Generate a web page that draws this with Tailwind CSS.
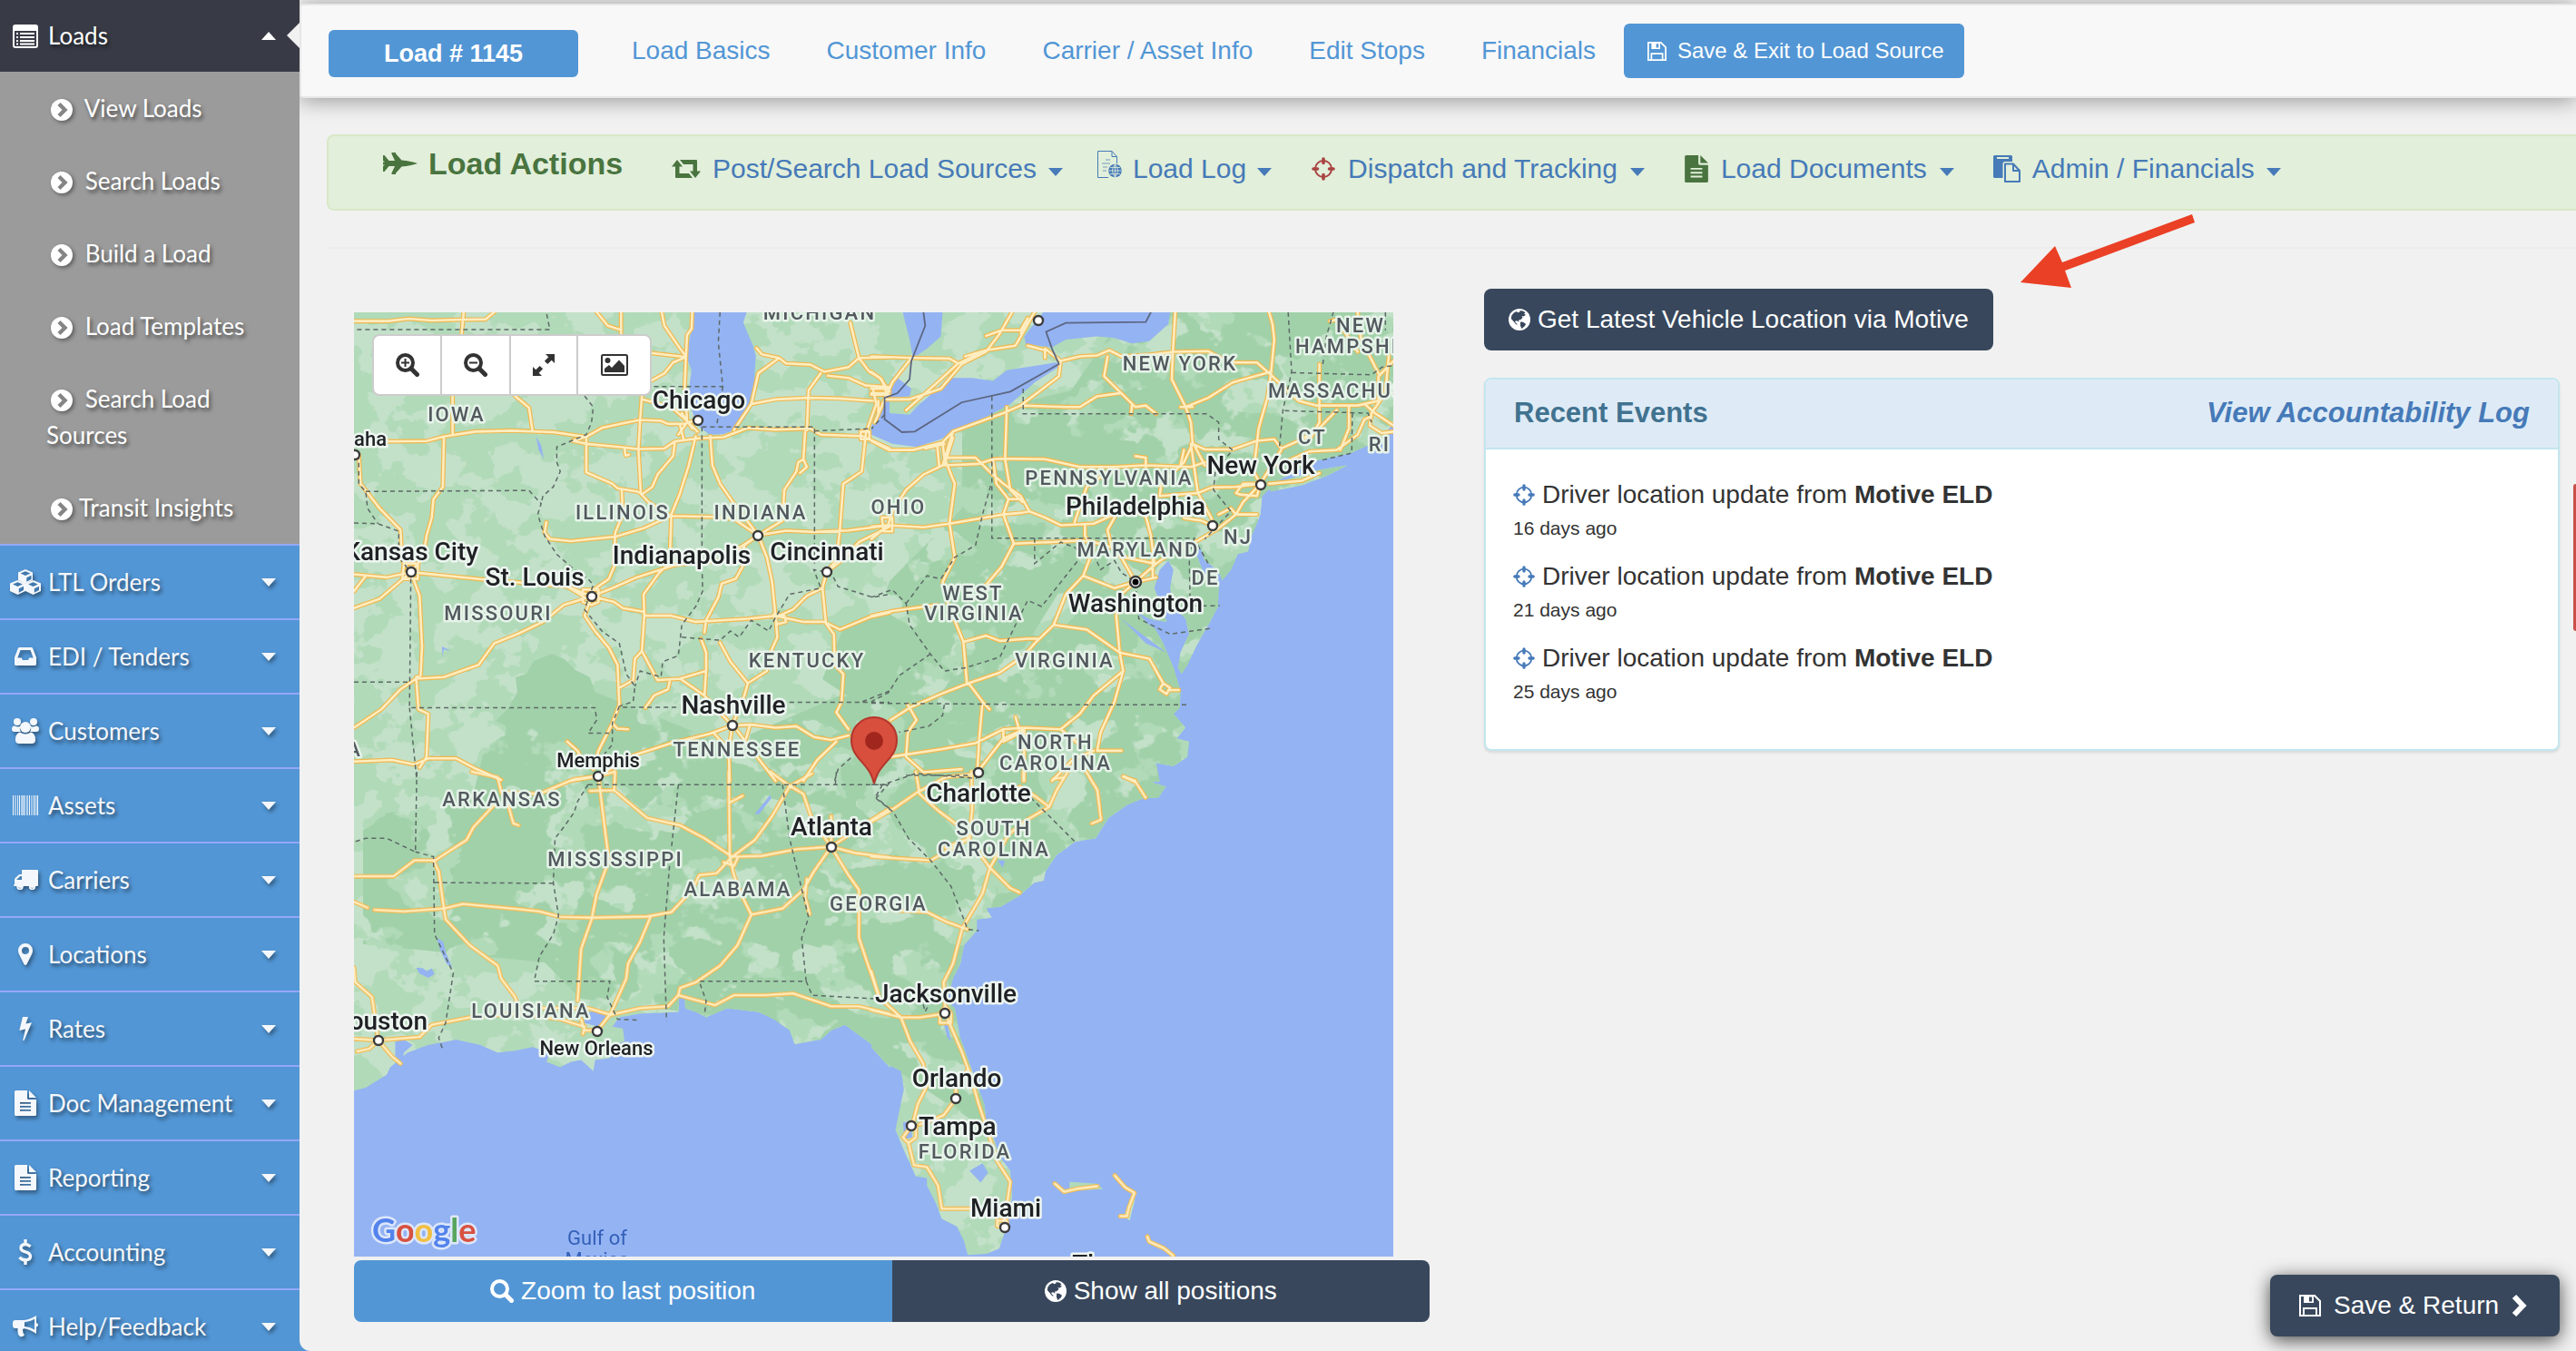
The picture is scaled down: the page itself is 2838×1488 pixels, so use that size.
<!DOCTYPE html>
<html lang="en">
  <head>
    <meta charset="UTF-8" />
    <title>Load # 1145</title>
    <script src="https://cdn.jsdelivr.net/npm/@tailwindcss/browser@4"></script>
  </head>
  <body class="h-screen overflow-hidden bg-[#5296d5] font-['Liberation_Sans',Arial,sans-serif] text-[28px] text-[#333]">

    <!-- Icon set -->
    <svg class="hidden">
      <symbol id="i-list" viewBox="0 0 28 26">
        <path fill="currentColor" fill-rule="evenodd" d="M3 0h22a3 3 0 0 1 3 3v20a3 3 0 0 1-3 3H3a3 3 0 0 1-3-3V3a3 3 0 0 1 3-3zM2 7v16q0 1 1 1h22q1 0 1-1V7z" />
        <path stroke="currentColor" stroke-width="2" d="M4 10h2M8 10h16M4 14h2M8 14h16M4 18h2M8 18h16M4 21.500h2M8 21.500h16" />
      </symbol>
      <symbol id="i-go" viewBox="0 0 24 24">
        <circle cx="12" cy="12" r="12" fill="currentColor" />
        <path d="M9 5.500l6.500 6.500L9 18.500" fill="none" stroke="#858585" stroke-width="4.400" />
      </symbol>
      <symbol id="i-cubes" viewBox="0 0 34 28">
        <g fill="currentColor">
          <path d="M17 0l8 3.500v8.500l-8 4-8-4V3.500z" />
          <path d="M8.500 12l8.500 3.500v8.500l-8.500 4L0 24v-8.500z" />
          <path d="M25.500 12l8.500 3.500v8.500l-8.500 4-8.500-4v-8.500z" />
        </g>
        <g fill="#3f78ad">
          <path d="M17 2.200l5.400 2.300L17 6.900l-5.400-2.400z" />
          <path d="M8.500 14.200l5.400 2.300-5.400 2.400-5.400-2.400zM25.500 14.200l5.400 2.300-5.400 2.400-5.400-2.400z" />
          <path d="M18.300 9.200l5.200-2.400v4.300l-5.200 2.600zM9.800 21.200l5.200-2.400v4.300l-5.200 2.600zM26.800 21.200l5.200-2.400v4.300l-5.200 2.600z" />
        </g>
      </symbol>
      <symbol id="i-inbox" viewBox="0 0 24 20">
        <path fill="currentColor" fill-rule="evenodd" d="M5.500 0h13q1.200 0 1.700 1.200L24 11v7.500q0 1.500-1.500 1.500h-21Q0 20 0 18.500V11L3.800 1.200Q4.300 0 5.500 0zM6.500 3L3.400 11.500h4.300L9 14h6l1.300-2.500h4.300L17.500 3z" />
      </symbol>
      <symbol id="i-users" viewBox="0 0 30 28">
        <g fill="currentColor">
          <circle cx="6" cy="4" r="4" /><circle cx="24" cy="4" r="4" />
          <path d="M3 8.500q5 2 6.500-.3Q8 12 9.800 15H3q-3 0-3-3 0-3.500 3-3.500zM27 8.500q-5 2-6.500-.3Q22 12 20.200 15H27q3 0 3-3 0-3.500-3-3.500z" />
          <circle cx="15" cy="10" r="6" />
          <path d="M9 15.500q6 4 12 0 5 1 5 8.500 0 4-4 4H8q-4 0-4-4 0-7.500 5-8.500z" />
        </g>
      </symbol>
      <symbol id="i-barcode" viewBox="0 0 28 22">
        <path fill="currentColor" d="M0 0h1v22H0zM2.500 0h1v22h-1zM5 0h.8v22H5zM7 0h1v22H7zM18 0h1v22h-1zM20.500 0h1v22h-1zM23 0h1.200v22H23zM27 0h1v22h-1z" />
        <path fill="currentColor" opacity=".6" d="M9 0h5v22H9zM15 0h2v22h-2zM25 0h1.500v22H25z" />
      </symbol>
      <symbol id="i-truck" viewBox="0 0 27 22">
        <path fill="currentColor" fill-rule="evenodd" d="M10 0h16q1 0 1 1v16q0 1-1 1h-2a4 4 0 0 1-7 0h-6a4 4 0 0 1-7 0H1q-1 0-1-1 0-1 1-1V11q0-1 .7-1.700L5.300 5.700Q6 5 7 5h2V1q0-1 1-1zM3 11h6V7H7.200z" />
        <circle cx="7" cy="18.500" r="2.800" fill="none" stroke="currentColor" stroke-width="1.800" />
        <circle cx="20.500" cy="18.500" r="2.800" fill="none" stroke="currentColor" stroke-width="1.800" />
      </symbol>
      <symbol id="i-pin" viewBox="0 0 16 24">
        <path fill="currentColor" fill-rule="evenodd" d="M8 0a8 8 0 0 1 8 8q0 2-1 4L9.500 23q-1.500 2-3 0L1 12Q0 10 0 8a8 8 0 0 1 8-8zm0 4a4 4 0 1 0 0 8 4 4 0 0 0 0-8z" />
      </symbol>
      <symbol id="i-bolt" viewBox="0 0 14 26">
        <path fill="currentColor" d="M4 0h6L7.500 7.500 14 6.200 5.500 26h-1.300L7 13.500.3 15z" />
      </symbol>
      <symbol id="i-file" viewBox="0 0 24 28">
        <path fill="currentColor" fill-rule="evenodd" d="M1.500 0H14v8.500q0 1.500 1.500 1.500H24v16.500q0 1.500-1.500 1.500h-21Q0 28 0 26.500v-25Q0 0 1.500 0zM6 13v1.800h12V13zm0 4v1.800h12V17zm0 4v1.800h12V21z" />
        <path fill="currentColor" d="M16 0l8 8h-8z" />
      </symbol>
      <symbol id="i-dollar" viewBox="0 0 16 28">
        <path d="M13.500 8Q11 5.500 8 5.500q-5 0-5 4 0 3 5 4.300 5.500 1.400 5.500 5 0 4-5.500 4-4 0-6.500-3M8 0v6M8 22v6" fill="none" stroke="currentColor" stroke-width="3.400" />
      </symbol>
      <symbol id="i-horn" viewBox="0 0 28 24">
        <path fill="currentColor" fill-rule="evenodd" d="M26 0v8q2 .3 2 2.300T26 12.600V20Q19 14.800 12 14.200q-2 1.500-.6 3.300-.6 1.500 1.600 3.500-1.300 2.800-5 2Q5 21 5.500 14H3q-3 0-3-3V8q0-3 3-3h8Q18 5 26 0zm-2 3.700Q18.500 6.900 13 7.200v4.700q5.500.3 11 3.600z" />
      </symbol>
      <symbol id="i-caret" viewBox="0 0 16 9"><path fill="currentColor" d="M0 0h16L8 9z" /></symbol>
      <symbol id="i-floppy" viewBox="0 0 24 24">
        <path fill="none" stroke="currentColor" stroke-width="2" d="M1 1h16l6 6v16H1z" />
        <path fill="none" stroke="currentColor" stroke-width="2" d="M5 23v-8h14v8" />
        <path fill="currentColor" fill-rule="evenodd" d="M5 1h11v8H5zm6 1.500v5h3v-5z" />
      </symbol>
      <symbol id="i-jet" viewBox="0 0 38 24">
        <path fill="currentColor" d="M0 3h1.500l5 6H13L9.500 1.500V0H14v1.200l6.500 7.300 5 .5Q34 10.500 38 12q-4 1.500-12.500 3l-5 .5L14 22.800V24H9.500v-1.500L13 15H6.500l-5 6H0v-6l2-1.500H0v-3h2L0 9z" />
      </symbol>
      <symbol id="i-retweet" viewBox="0 0 32 20">
        <path fill="currentColor" d="M6 0l6 7.500H8.500V15H19l4 5H5q-1 0-1-1V7.500H0zM26 20l-6-7.500h3.500V5H13L9 0h18q1 0 1 1v11.500h4z" />
      </symbol>
      <symbol id="i-target" viewBox="0 0 26 26">
        <circle cx="13" cy="13" r="9" fill="none" stroke="currentColor" stroke-width="2" />
        <path stroke="currentColor" stroke-width="3.600" stroke-linecap="round" d="M13 2v4.500M13 19.500v4.500M2 13h4.500M19.500 13h4.500" />
      </symbol>
      <symbol id="i-weblog" viewBox="0 0 27 30">
        <path fill="none" stroke="currentColor" stroke-width="1" d="M12 29.500H.5V.5h15.500l5.500 6V14M16 .5v6h5.500" />
        <path stroke="currentColor" stroke-width="1" opacity=".7" d="M9 10h5M5 14h9M6 18h5M6 22h4" />
        <circle cx="19.500" cy="22" r="7.300" fill="currentColor" />
        <path fill="none" stroke="#e2efda" stroke-width=".8" d="M12.500 22h14M19.500 15v14M14 18.500h11M14 25.500h11M19.500 15q-6 7 0 14M19.500 15q6 7 0 14" />
      </symbol>
      <symbol id="i-paste" viewBox="0 0 30 30">
        <path fill="currentColor" fill-rule="evenodd" d="M1.500 0h18Q21 0 21 1.500V7h-8q-2.500 0-2.500 2.500V25h-9Q0 25 0 23.500v-22Q0 0 1.500 0zM4 2v2h13V2z" />
        <path fill="none" stroke="currentColor" stroke-width="2" stroke-linejoin="round" d="M13 9.500h9l7 7.500v12H13zM22 9.500V17h7" />
      </symbol>
      <symbol id="i-globe" viewBox="0 0 24 24">
        <circle cx="12" cy="12" r="12" fill="currentColor" />
        <path fill="#38475c" d="M12.500 2l4 .8 2 1.700-1.500 1.200 2 1-2.500 1.800-2-.5 1 2-2.500 2.300-2 .3.500 2.200-1.800-1.200-2-.3-.4 1.800 1.800 1.500.8 1.200-2-.8-2.400-3L2.800 11l.6-3.500 2.400-3L9 3l1 1.200 2.500-.7zM13 14.500l3 .2 3 2-1 2.300-3.500 3-1.500-3z" />
      </symbol>
      <symbol id="i-search" viewBox="0 0 26 26">
        <circle cx="10.500" cy="10.500" r="8.500" fill="none" stroke="currentColor" stroke-width="4" />
        <path d="M17 17l6.500 6.500" stroke="currentColor" stroke-width="5" stroke-linecap="round" />
      </symbol>
      <symbol id="i-expand" viewBox="0 0 24 24">
        <path fill="currentColor" d="M14 0h10v10l-3.300-3.300-4.400 4.400-3.400-3.400 4.400-4.400zM10 24H0V14l3.300 3.300 4.400-4.400 3.400 3.400-4.400 4.400z" />
      </symbol>
      <symbol id="i-image" viewBox="0 0 30 24">
        <rect x="1" y="1" width="28" height="22" rx="1.500" fill="none" stroke="currentColor" stroke-width="2" />
        <circle cx="7.500" cy="7" r="3" fill="currentColor" />
        <path fill="currentColor" d="M4 20v-4l5-4 3 3 8-8.500 6 6.500v7z" />
      </symbol>
      <symbol id="i-next" viewBox="0 0 17 26">
        <path d="M3 3l9.500 10L3 23" fill="none" stroke="currentColor" stroke-width="6" />
      </symbol>
    </svg>

    <div class="flex h-full">

      <!-- Sidebar -->
      <aside class="relative w-[330px] shrink-0 font-[Lato,'Open_Sans',sans-serif] text-[26px] text-white [text-shadow:2px_3px_4px_rgba(0,0,0,.55)]">
        <a href="#loads" class="relative flex h-[79px] items-center bg-[#383b46] pl-[14px] pr-[26px]">
          <svg class="mr-[11px] h-[26px] w-[28px]"><use href="#i-list" /></svg>
          Loads
          <svg class="ml-auto h-[11px] w-[16px] rotate-180"><use href="#i-caret" /></svg>
          <svg class="absolute right-0 top-[25px] h-[28px] w-[14px]" viewBox="0 0 14 28"><path fill="#f1f1f1" d="M14 0v28L0 14z" /></svg>
        </a>
        <ul class="bg-[#9b9b9b] leading-[40px]">
          <li><a href="#view" class="block py-[20px] pl-[51px] pr-5"><svg class="ml-[5px] mr-[7px] inline h-6 w-6 align-[-4px] drop-shadow-[2px_2px_2px_rgba(0,0,0,.4)]"><use href="#i-go" /></svg> View Loads</a></li>
          <li><a href="#search" class="block py-[20px] pl-[51px] pr-5"><svg class="ml-[5px] mr-[7px] inline h-6 w-6 align-[-4px] drop-shadow-[2px_2px_2px_rgba(0,0,0,.4)]"><use href="#i-go" /></svg> Search Loads</a></li>
          <li><a href="#build" class="block py-[20px] pl-[51px] pr-5"><svg class="ml-[5px] mr-[7px] inline h-6 w-6 align-[-4px] drop-shadow-[2px_2px_2px_rgba(0,0,0,.4)]"><use href="#i-go" /></svg> Build a Load</a></li>
          <li><a href="#templates" class="block py-[20px] pl-[51px] pr-5"><svg class="ml-[5px] mr-[7px] inline h-6 w-6 align-[-4px] drop-shadow-[2px_2px_2px_rgba(0,0,0,.4)]"><use href="#i-go" /></svg> Load Templates</a></li>
          <li><a href="#sources" class="block py-[20px] pl-[51px] pr-8"><svg class="ml-[5px] mr-[7px] inline h-6 w-6 align-[-4px] drop-shadow-[2px_2px_2px_rgba(0,0,0,.4)]"><use href="#i-go" /></svg> Search Load Sources</a></li>
          <li><a href="#transit" class="block py-[20px] pl-[51px] pr-5"><svg class="ml-[5px] mr-[7px] inline h-6 w-6 align-[-4px] drop-shadow-[2px_2px_2px_rgba(0,0,0,.4)]"><use href="#i-go" /></svg>Transit Insights</a></li>
        </ul>
        <nav class="text-[#f4f7fb]">
          <a href="#ltl" class="flex h-[82px] items-center border-t-2 border-[#94a8f8] pl-[10px] pr-[26px]"><span class="mr-[7px] flex w-9 justify-center drop-shadow-[2px_3px_2px_rgba(0,0,0,.4)]"><svg class="h-[28px] w-[34px]"><use href="#i-cubes" /></svg></span>LTL Orders<svg class="ml-auto h-[9px] w-[16px] drop-shadow-[2px_3px_2px_rgba(0,0,0,.4)]"><use href="#i-caret" /></svg></a>
          <a href="#edi" class="flex h-[82px] items-center border-t-2 border-[#94a8f8] pl-[10px] pr-[26px]"><span class="mr-[7px] flex w-9 justify-center drop-shadow-[2px_3px_2px_rgba(0,0,0,.4)]"><svg class="h-[20px] w-[24px]"><use href="#i-inbox" /></svg></span>EDI / Tenders<svg class="ml-auto h-[9px] w-[16px] drop-shadow-[2px_3px_2px_rgba(0,0,0,.4)]"><use href="#i-caret" /></svg></a>
          <a href="#customers" class="flex h-[82px] items-center border-t-2 border-[#94a8f8] pl-[10px] pr-[26px]"><span class="mr-[7px] flex w-9 justify-center drop-shadow-[2px_3px_2px_rgba(0,0,0,.4)]"><svg class="h-[28px] w-[30px]"><use href="#i-users" /></svg></span>Customers<svg class="ml-auto h-[9px] w-[16px] drop-shadow-[2px_3px_2px_rgba(0,0,0,.4)]"><use href="#i-caret" /></svg></a>
          <a href="#assets" class="flex h-[82px] items-center border-t-2 border-[#94a8f8] pl-[10px] pr-[26px]"><span class="mr-[7px] flex w-9 justify-center"><svg class="h-[22px] w-[28px]"><use href="#i-barcode" /></svg></span>Assets<svg class="ml-auto h-[9px] w-[16px] drop-shadow-[2px_3px_2px_rgba(0,0,0,.4)]"><use href="#i-caret" /></svg></a>
          <a href="#carriers" class="flex h-[82px] items-center border-t-2 border-[#94a8f8] pl-[10px] pr-[26px]"><span class="mr-[7px] flex w-9 justify-center drop-shadow-[2px_3px_2px_rgba(0,0,0,.4)]"><svg class="h-[22px] w-[27px]"><use href="#i-truck" /></svg></span>Carriers<svg class="ml-auto h-[9px] w-[16px] drop-shadow-[2px_3px_2px_rgba(0,0,0,.4)]"><use href="#i-caret" /></svg></a>
          <a href="#locations" class="flex h-[82px] items-center border-t-2 border-[#94a8f8] pl-[10px] pr-[26px]"><span class="mr-[7px] flex w-9 justify-center drop-shadow-[2px_3px_2px_rgba(0,0,0,.4)]"><svg class="h-[24px] w-[16px]"><use href="#i-pin" /></svg></span>Locations<svg class="ml-auto h-[9px] w-[16px] drop-shadow-[2px_3px_2px_rgba(0,0,0,.4)]"><use href="#i-caret" /></svg></a>
          <a href="#rates" class="flex h-[82px] items-center border-t-2 border-[#94a8f8] pl-[10px] pr-[26px]"><span class="mr-[7px] flex w-9 justify-center drop-shadow-[2px_3px_2px_rgba(0,0,0,.4)]"><svg class="h-[26px] w-[14px]"><use href="#i-bolt" /></svg></span>Rates<svg class="ml-auto h-[9px] w-[16px] drop-shadow-[2px_3px_2px_rgba(0,0,0,.4)]"><use href="#i-caret" /></svg></a>
          <a href="#docs" class="flex h-[82px] items-center border-t-2 border-[#94a8f8] pl-[10px] pr-[26px]"><span class="mr-[7px] flex w-9 justify-center drop-shadow-[2px_3px_2px_rgba(0,0,0,.4)]"><svg class="h-[28px] w-[24px]"><use href="#i-file" /></svg></span>Doc Management<svg class="ml-auto h-[9px] w-[16px] drop-shadow-[2px_3px_2px_rgba(0,0,0,.4)]"><use href="#i-caret" /></svg></a>
          <a href="#reporting" class="flex h-[82px] items-center border-t-2 border-[#94a8f8] pl-[10px] pr-[26px]"><span class="mr-[7px] flex w-9 justify-center drop-shadow-[2px_3px_2px_rgba(0,0,0,.4)]"><svg class="h-[28px] w-[24px]"><use href="#i-file" /></svg></span>Reporting<svg class="ml-auto h-[9px] w-[16px] drop-shadow-[2px_3px_2px_rgba(0,0,0,.4)]"><use href="#i-caret" /></svg></a>
          <a href="#accounting" class="flex h-[82px] items-center border-t-2 border-[#94a8f8] pl-[10px] pr-[26px]"><span class="mr-[7px] flex w-9 justify-center drop-shadow-[2px_3px_2px_rgba(0,0,0,.4)]"><svg class="h-[28px] w-[16px]"><use href="#i-dollar" /></svg></span>Accounting<svg class="ml-auto h-[9px] w-[16px] drop-shadow-[2px_3px_2px_rgba(0,0,0,.4)]"><use href="#i-caret" /></svg></a>
          <a href="#help" class="flex h-[82px] items-center border-t-2 border-[#94a8f8] pl-[10px] pr-[26px]"><span class="mr-[7px] flex w-9 justify-center drop-shadow-[2px_3px_2px_rgba(0,0,0,.4)]"><svg class="h-[24px] w-[28px]"><use href="#i-horn" /></svg></span>Help/Feedback<svg class="ml-auto h-[9px] w-[16px] drop-shadow-[2px_3px_2px_rgba(0,0,0,.4)]"><use href="#i-caret" /></svg></a>
        </nav>
      </aside>

      <main class="relative min-w-0 flex-1 overflow-hidden rounded-bl-[12px] bg-[#f1f1f1] pt-1">

        <!-- Top nav -->
        <header class="flex h-[104px] items-center rounded-l-[4px] border-2 border-r-0 border-[#e7e7e7] bg-[#f8f8f8] pl-[30px] text-[#5296d5] shadow-[0_2px_24px_rgba(0,0,0,.4)]">
          <button class="mt-1.5 h-[52px] w-[275px] rounded-md bg-[#5296d5] text-[27px] font-bold text-white">Load # 1145</button>
          <nav class="ml-7 flex">
            <a href="#basics" class="px-[31px]">Load Basics</a>
            <a href="#customer" class="px-[31px]">Customer Info</a>
            <a href="#carrier" class="px-[31px]">Carrier / Asset Info</a>
            <a href="#stops" class="px-[31px]">Edit Stops</a>
            <a href="#financials" class="px-[31px]">Financials</a>
          </nav>
          <button class="flex h-[60px] items-center gap-3 rounded-md bg-[#5296d5] pl-[26px] pr-[22px] text-[24px] text-white">
            <svg class="h-[21px] w-[21px]"><use href="#i-floppy" /></svg>Save &amp; Exit to Load Source
          </button>
        </header>

        <!-- Load actions -->
        <section class="ml-[30px] mt-10 flex items-start rounded-l-lg border-2 border-r-0 border-[#d9e8c6] bg-[#e2efda] pb-2 pl-[60px] text-[30px] leading-[72px] text-[#467ab8]">
          <h4 class="mr-[54px] flex items-center gap-3 text-[34px] font-bold leading-[60px] text-[#49743f]">
            <svg class="h-[24px] w-[38px]"><use href="#i-jet" /></svg>Load Actions
          </h4>
          <a href="#post" class="flex items-center gap-[13px]"><svg class="h-[20px] w-[32px] text-[#49743f]"><use href="#i-retweet" /></svg>Post/Search Load Sources<svg class="mt-1.5 h-[9px] w-[16px]"><use href="#i-caret" /></svg></a>
          <a href="#log" class="ml-[38px] flex items-center gap-3"><svg class="mb-2.5 h-[30px] w-[27px]"><use href="#i-weblog" /></svg>Load Log<svg class="mt-1.5 h-[9px] w-[16px]"><use href="#i-caret" /></svg></a>
          <a href="#dispatch" class="ml-11 flex items-center gap-[14px]"><svg class="h-[26px] w-[26px] text-[#a94442]"><use href="#i-target" /></svg>Dispatch and Tracking<svg class="mt-1.5 h-[9px] w-[16px]"><use href="#i-caret" /></svg></a>
          <a href="#documents" class="ml-11 flex items-center gap-[14px]"><svg class="h-[30px] w-[26px] text-[#49743f]"><use href="#i-file" /></svg>Load Documents<svg class="mt-1.5 h-[9px] w-[16px]"><use href="#i-caret" /></svg></a>
          <a href="#admin" class="ml-[43px] flex items-center gap-[13px]"><svg class="h-[30px] w-[30px]"><use href="#i-paste" /></svg>Admin / Financials<svg class="mt-1.5 h-[9px] w-[16px]"><use href="#i-caret" /></svg></a>
        </section>

        <hr class="ml-[30px] mt-10 border-t-2 border-[#ececec]" />

        <div class="mt-11 grid grid-cols-2 gap-[60px] pl-[60px] pr-[18px]">

          <!-- Map -->
          <div class="pt-[26px]">
            <div class="relative mr-10">
              <svg class="block w-full" viewBox="390 344 1145 1040">
                <defs>
                  <filter id="light" x="0" y="0" width="1" height="1" color-interpolation-filters="sRGB">
                    <feTurbulence type="fractalNoise" baseFrequency=".024 .028" numOctaves="4" seed="8" />
                    <feColorMatrix values="0 0 0 0 .765  0 0 0 0 .882  0 0 0 0 .79  26 0 0 0 -12.800" />
                    <feComposite in2="SourceAlpha" operator="in" />
                  </filter>
                  <filter id="dark" x="0" y="0" width="1" height="1" color-interpolation-filters="sRGB">
                    <feTurbulence type="fractalNoise" baseFrequency=".02 .024" numOctaves="4" seed="31" />
                    <feColorMatrix values="0 0 0 0 .631  0 0 0 0 .82  0 0 0 0 .663  0 26 0 0 -11" />
                    <feComposite in2="SourceAlpha" operator="in" />
                  </filter>
                  <clipPath id="hills">
                    <path d="M1535 344V800L1240 1060 1080 1240 960 1160 800 1120 640 1100 600 1060 400 1040V900L520 880 540 800 600 740 700 780 800 820 940 760 980 640 1060 560 1060 460 1180 430 1240 344z" />
                  </clipPath>

                  <g id="land">
                    <g transform="translate(380 330) scale(.38265 .33801)">
                      <path d="M0 0H1570V1570H0z" />
                    </g>
                    <g transform="translate(960 330) scale(.38265 .33801)">
                      <path d="M0 0H1520V430L1460 470 1430 475 1380 500 1280 525 1170 590 1125 640 1120 700 1095 770 1085 820 1055 830 1035 880 1010 915 1000 885 960 850 945 800 935 830 960 900 1000 930 998 1000 970 1060 935 1130 910 1190 893 1220 883 1200 890 1150 915 1090 905 1040 870 1000 860 940 870 880 855 850 830 880 815 940 835 1000 850 1050 800 1040 840 1120 870 1200 890 1275 888 1330 870 1350 905 1395 880 1430 915 1440 910 1490 870 1520 820 1510 830 1570H0zM1140 605L1290 555 1370 540 1310 575 1240 605 1150 625z" />
                    </g>
                    <g transform="translate(380 850) scale(.38265 .40689)">
                      <path d="M0 0H1570V803L1520 740 1490 720 1440 685 1400 700 1370 725 1295 737 1280 700 1235 670 1190 650 1100 640 1040 665 1010 650 980 640 978 612 962 614 960 650 850 655 790 665 770 690 800 695 805 730 745 745 765 775 720 780 715 810 680 780 650 785 620 800 580 785 590 760 540 745 490 755 440 760 390 740 320 725 240 740 180 760 130 800 120 820 60 855 0 870z" />
                    </g>
                    <g transform="translate(960 850) scale(.40816 .40689)">
                      <path d="M0 0H775L760 30 795 40 775 70 735 72 690 90 640 125 605 180 550 190 500 225 470 270 465 295 440 300 400 335 350 365 310 370 325 395 285 400 285 430 250 470 240 520 220 560 205 620 225 640 240 720 265 790 290 860 305 900 310 950 330 990 345 1040 375 1080 380 1150 365 1230 345 1290 310 1305 260 1308 250 1270 230 1230 190 1210 175 1170 150 1120 150 1100 120 1095 95 1040 65 970 75 920 88 860 80 810 40 790 0 745zM535 1110l75 5 15 15-90 5zM700 1150l12 5-15 60-15-12z" />
                    </g>
                  </g>

                  <!-- Interstates -->
                  <g id="roads" fill="none" stroke-linejoin="round" stroke-linecap="round">
                    <path vector-effect="non-scaling-stroke" transform="translate(380 330) scale(.38265 .33801)" d="M26 70L125 70 185 62 250 68 315 66 405 64 430 41M342 41L340 66 336 112 310 314 310 437M725 41L757 85 793 98M795 41V112M912 41L920 85 965 160 982 185M1000 41L998 95 985 115 982 185 978 290 985 390M880 174L982 187 945 205 920 240 880 265M26 463L235 461 285 446 375 430 480 427 600 432 695 447 655 460 695 470 790 480 845 487 920 485 950 462 1020 452 1090 448 1160 418 1240 424 1340 420 1370 440 1490 445 1568 485M285 446L282 610 255 650 250 710 235 770 225 840 190 888M490 314L530 352 540 427M695 447V563L770 600 785 615 840 625 857 633M695 447L740 418 800 403 850 392 910 395 930 405 980 405M855 314L850 392 845 487 852 633 875 660 938 705 1060 708 1120 715 1190 768M855 325L940 350 975 385 1015 430M970 370L1000 420M960 440L985 400 1010 395M965 410L975 455M805 485L808 508 818 505M950 462L945 510 900 570 885 610 857 633M1010 445L990 540 965 630 940 700 938 760 935 860 905 890 860 960M1052 445L1058 540 1080 600 1120 665 1190 768M1190 768L1270 753 1350 757 1450 752 1568 735M1190 768L1260 720 1265 620 1300 560 1305 530 1320 520 1330 545 1310 565M1320 520L1325 430M1170 340L1240 325 1330 320 1420 322 1520 330M1120 425L1170 340 1190 240 1250 190 1270 208 1340 212 1380 235 1450 220 1480 190 1568 188M1185 158L1200 178 1250 190M1370 240L1335 295 1330 425M1455 75L1480 190 1510 235 1540 255 1568 300M1390 248L1450 255 1500 280 1568 285M1520 290L1530 340 1500 435 1488 560 1435 600 1425 750 1415 850 1387 887M1515 290H1568M1515 310H1568M1485 430h25v25h-25zM1568 740L1480 790 1430 850 1387 887 1375 940 1330 965 1290 1010 1240 1035M1190 768L1150 800 1145 870 1125 910 1085 925 1075 970 1040 1045 1035 1085M1190 768L1215 840 1230 920 1240 1035 1245 1100 1225 1150 1215 1210 1160 1250 1150 1290 1115 1388M1235 1025l30 5 5 20-25 8zM1025 1105L1040 1150V1210L1035 1290M1080 1118L1110 1180 1160 1250M710 967L775 985 800 1005 860 1017 865 1030 940 1030 1010 1050 1160 1040 1240 1030 1320 1050 1380 1050 1425 1075 1510 1035 1568 1020M1375 940L1385 1055 1408 1090 1410 1190 1435 1220 1430 1310 1415 1345 1450 1400M40 505L45 600 100 680 160 750 165 850 190 888M26 895L120 905 190 888 400 912 640 935 710 967M640 935L690 970M190 888L215 965 222 1130 218 1225 205 1230 212 1335 240 1350 235 1490 215 1525M190 888L100 975 26 1005M60 900L26 950M170 860h40v50h-45zM685 945h45v40l-20 10-25-10zM710 967L630 995 570 1050 500 1088 430 1120 385 1190 285 1230 205 1235 160 1270 105 1335 26 1395M710 967L690 1030 720 1080 760 1135 785 1190 790 1320 770 1380 730 1470 715 1530M710 967L770 940 840 905 950 865 1080 850 1190 768M710 950L760 910 775 870 778 760 800 700 797 620M580 725L575 760 590 780 650 787 780 772 860 745 938 705M860 960L862 1030 855 1145 835 1170 830 1240 790 1265M855 1145L900 1240 965 1235 1040 1210M965 1235L1035 1290 1115 1388M865 1330L890 1290 930 1270 935 1245M1115 1388L1050 1415 940 1445 830 1485 730 1552M1115 1388L1170 1385 1240 1395 1300 1390 1350 1425 1400 1435 1450 1420M1060 1410L1100 1460M1165 1390L1155 1430M1130 1405L1180 1480 1240 1568M1115 1388L1105 1470 1108 1568M1415 1440L1360 1500 1320 1568M730 1552L650 1568M640 1440L670 1470 690 1520M26 1505L135 1500 200 1515 240 1495 320 1495 370 1525 450 1565M770 1380L785 1398 815 1400" />
                    <path vector-effect="non-scaling-stroke" transform="translate(960 330) scale(.38265 .33801)" d="M0 185L120 190 225 192 250 208 330 165 415 150 440 100 460 60M405 41L370 110 330 170 260 210 200 290 110 325 45 325M470 41L430 110M330 118L375 100 430 100 450 60M270 185L330 165M250 208L190 270 150 310 100 360M115 190L60 270 40 320 10 400M0 235L30 260 45 310M0 290H40M0 305H40M20 330V370M450 150L500 165V190M500 160L545 200M0 460L50 490 120 490 205 465 235 430 380 370 430 345 540 250 545 200 600 185 650 182 685 165 720 185 800 180 870 170 970 168 1030 205 1110 205 1150 245M875 41L868 170 865 260 905 350 920 400 925 470 900 530 835 600 830 640M1145 41L1155 80 1160 130 1150 245 1140 320 1115 420 1110 470M890 350H925M905 350L970 320 1040 270 1150 235M680 185L670 250 715 300 760 350 790 345 820 372M430 345L560 350 600 350 650 315 715 305M750 345L748 372M390 350L385 520M205 465L210 515 300 515 340 560 380 600 430 640 455 690 500 710 545 735 640 730 700 700 760 690M155 485L210 470M190 480L195 540M235 450L210 540M210 540L310 535 350 520 385 518 500 520 600 545 700 545 790 540 920 545 960 530M760 510L790 515V545M925 470L960 488 1040 488 1110 460 1160 455 1180 485 1230 460 1280 430 1340 360M930 475L960 540M900 490L890 540M1180 490L1120 600M1170 540L1260 495 1340 490 1400 440 1420 390 1440 380M1145 600L1240 590 1290 565M1290 210V400L1260 460M1150 245L1230 330 1280 345 1400 345 1460 330 1460 250 1503 200M1400 41L1410 130 1460 240M1420 340L1450 370 1503 410M1440 370L1470 320M1440 370L1435 410 1470 435 1503 430M1320 70L1340 65 1400 170M1490 180L1480 300M1375 345V420L1350 490M1110 470L1100 560 1120 600 1070 660 1050 700 1000 745 940 785 870 820 820 860 760 920 720 960 705 1030 715 1150M1050 630L1070 600 1120 600 1110 640 1060 635zM1050 700H1110M980 735L950 720 900 712M1000 700L1035 680 1050 700M920 470L940 630 980 715M830 640L940 630 980 612 1050 610 1120 600M700 545L620 610 585 725M760 690L790 705 805 770 815 860M700 710L680 750 690 800 720 840 760 920M235 430L205 540 150 570 100 620 60 690 48 735M210 515L240 600 225 730 240 840 205 920 220 990 265 1115 275 1250M30 710h30v45h-25zM0 740L48 735 150 742 225 730 380 700 430 695 455 690M48 735L0 780M350 520L360 600 395 650 380 700 410 795 375 870 330 930M385 520L400 620 435 660M395 650H430M410 795L520 790 600 785 640 790 700 810 730 840 815 860M615 735V770L640 810 610 900 560 960 525 1060 470 1120 440 1160 370 1215 280 1250 200 1285 110 1330 55 1370M610 900L700 940 760 920 820 905M810 840V905M525 1060L620 1075 715 1150 800 1170 840 1250 830 1270 850 1285 860 1265 840 1250M855 1272H885M0 1030L60 1015 190 995M265 1115L330 1095 370 1112 450 1105 480 1105M715 1150L725 1210 700 1310 660 1410 650 1470 700 1470 720 1470M725 1210L640 1290 600 1350 545 1400M280 1250L320 1310 340 1335M320 1310L310 1440 305 1540M105 1320L130 1370 105 1410 100 1490 150 1540 260 1530M55 1490L200 1465 300 1445 380 1400 440 1395 545 1400 600 1450M305 1540L380 1430 440 1400M415 1360L425 1400M380 1405V1440L440 1405M440 1400V1568M520 1568L580 1500 640 1470M725 1555L760 1568" />
                    <path vector-effect="non-scaling-stroke" transform="translate(380 850) scale(.38265 .40689)" d="M365 0L440 15 450 55 560 60 660 20 730 12 775 0M730 12L735 50 745 130 760 240 725 330 710 400 680 480 670 620M705 52L775 50 778 0M775 50L870 125 965 145 1035 180 1115 230M450 55L470 90 485 140 500 145M440 80L370 150 350 185 300 215 260 240 200 240 140 283 26 283M26 352L65 368M85 374L170 378 285 370 340 358 500 372 560 378 620 393 710 395 870 392 940 380 1000 320 1020 280 1070 275 1115 230M255 240L270 270 285 370 290 400 360 470 440 525 450 560 490 610 500 640M1105 0L1108 230 1120 280 1140 330 1170 387 1130 470 1080 525 1010 570 965 585 960 605 1065 632 1120 605 1210 605 1290 600 1400 635 1480 635 1568 655M1105 85L1145 65M1090 245L1120 255 1130 235M1115 230L1200 228 1300 210 1400 203 1470 220 1568 232M1115 230L1180 185 1230 120 1280 40 1345 5M1225 0L1275 35 1320 60 1345 130 1400 203M1400 203L1350 270 1320 320 1260 370 1170 387M1330 290L1325 340 1338 385M1400 203L1450 280 1480 320 1480 450 1505 520 1535 600M1400 120L1400 203 1500 140 1568 100M880 392L850 460 815 520 810 560 765 655M960 605L930 635 850 640 765 658 700 640 560 640M765 655L727 700 690 700 680 670M690 690L685 710M500 655L620 670 690 690M500 655L360 665 250 685 215 718 96 727 26 723M26 530L30 570 78 610 96 727 135 770 160 790M96 727L70 750 35 757" />
                    <path vector-effect="non-scaling-stroke" transform="translate(960 850) scale(.40816 .40689)" d="M0 135L60 100 125 55 200 15 290 5M120 0L130 60 180 105 240 150 320 260 375 315 400 327M270 0L272 100 265 180 160 240 80 235 0 230M265 180L200 205M580 0L610 50 620 130 595 140M680 12L715 30 740 70M410 0V25M530 0L500 50 480 95 420 130 370 170 320 260 300 330 245 425 220 520 195 570 200 650M400 40L440 65 480 95M490 20L520 15M60 375L150 380 200 405 260 427M0 540L20 610 80 665 130 665 200 655M0 645L80 665 105 730 140 790 150 850 125 900 110 960M200 655L245 760 270 830 290 900 310 960 340 1055 375 1110 365 1180 355 1234M185 655l15-20 15 20v25h-30zM228 885L195 930 130 955M228 885V850L262 805M107 960L85 990 100 1005 120 990V960M100 1005L115 1065 150 1070 180 1120 190 1183 265 1183M340 1215h25v15h-25zM495 1115L520 1137 560 1128 610 1122M657 1093L685 1125 710 1140 695 1180 690 1203 672 1203M745 1258L750 1272 790 1290 815 1310" />
                  </g>
                </defs>

                <rect x="390" y="344" width="1145" height="1040" fill="#94b3f3" />
                <use href="#land" fill="#b1dab8" />
                <use href="#land" filter="url(#light)" />
                <g clip-path="url(#hills)"><use href="#land" filter="url(#dark)" /></g>
                <g fill="#a1d1a9">
                  <path d="M588 728l20-8 14 6 12 12 16 8 6 18-6 12 4 14-16 10-22 2-18 8-14-12-16-4-6-18 8-14-2-16 12-4zM560 900l24 12 6 30-14 34-36 16-30-26-2-40 18-24z" />
                  <path d="M1130 500l50-20 70 6 20 20-60 14-70 4zM930 690l46-16 34 20-24 50-50 24-30-20zM1120 650l50-36 8 20-50 80-40 20z" />
                </g>

                <!-- Great Lakes, bays -->
                <g fill="#94b3f3">
                  <path transform="translate(380 330) scale(.38265 .33801)" d="M1003 41H1157L1147 75 1160 110 1175 150 1183 185 1180 240 1178 290 1168 345 1150 390 1120 425 1090 438 1050 440 1020 415 1005 380 990 330 993 270 998 230 988 200V150L1000 90zM1568 310L1550 340 1555 380 1540 395 1568 450zM280 1130l25 15-20-5-5 25zM550 445l15 30 8 45-15-30z" />
                  <path transform="translate(960 330) scale(.38265 .33801)" d="M90 41H205L200 120 160 160 120 190 110 130zM75 255L115 290 110 315 45 320zM495 41L440 120 445 145 520 155 560 130 650 120 700 125 750 143 800 135 855 80 860 41zM0 415L35 330 50 370 110 375 130 350 180 300 220 255 290 255 350 265 390 230 530 205 545 215 470 270 400 340 300 400 200 455 130 480 60 470 0 440zM765 1020L820 1050 860 1075 850 1095 800 1060zM720 1040l70 60 60 50-60-30zM1503 400l-30 50 30 50z" />
                  <path transform="translate(380 850) scale(.38265 .40689)" d="M145 730l25-5 25 15-25 20-5 30-20-20zM265 450l18 10 8 30 18 40-16-10-20-40zM205 530l20 2 10 8 15-8 8 16-18 10-25-12zM690 655l35-10 30 15-25 30-40-10zM1180 115l44-52 4 8-36 44z" />
                  <path transform="translate(960 850) scale(.40816 .40689)" d="M265 1080L300 1060 315 1085 295 1112zM195 680l10 0 10 50-10-10zM85 950l20-5 5 45-20 5zM340 240l20 0-5 20z" />
                </g>

                <use href="#roads" stroke="#f0b84f" stroke-width="5" />
                <use href="#roads" stroke="#fdedc0" stroke-width="2.600" />

                <!-- State and country lines -->
                <g fill="none" stroke="#5c6a66" stroke-width="1.500" stroke-dasharray="5 4">
                  <path vector-effect="non-scaling-stroke" transform="translate(380 330) scale(.38265 .33801)" d="M35 98H590L580 41M60 625L530 622 565 665 555 700 575 770 610 830 650 870 700 910 715 930 690 1010 740 1080 790 1120 810 1220 835 1260 830 1310 790 1325M690 314L715 350 710 400 695 440 610 480V530L620 560 600 610 570 640 565 665M26 728L95 730 155 755V840L190 888 186 1330H720L725 1370 700 1413H760M186 1330L207 1568M26 1246H186M40 505V600L60 625 65 680 95 730M800 1328H965M1280 1312H1568M790 1325L770 1380V1450L740 1490M1080 41L1075 140 1088 283H885M1088 283L1070 415M1028 415H1352V860M1028 415V860L1030 950 1010 1000 970 1060 960 1160 915 1180 910 1230 850 1210 835 1260M970 1100L1080 1110 1110 1080 1135 1100 1170 1045 1220 1080 1240 1035 1280 960 1370 940 1350 880 1400 890 1420 935 1520 970 1568 960M1352 428L1520 420M1490 1310L1568 1275M1410 1568L1420 1530 1460 1490" />
                  <path vector-effect="non-scaling-stroke" transform="translate(960 330) scale(.38265 .33801)" d="M437 290V372H965L1000 400V455L1040 490 990 560 985 620 1035 690 960 780M347 315V777H930L915 830 918 998H1003M470 777V860L545 790 590 810 595 850 490 1000 450 980 415 1060 370 1165 270 1200 210 1210 170 1155 110 1060 100 990 60 945 0 970M100 990L160 900 200 910 240 840 300 800 320 700 345 600M640 830L660 880 700 850 720 890 760 920 770 1040 860 1090 985 1070M940 800L975 870M0 1315L540 1320H910M210 1320L205 1355 165 1390 80 1410M170 1155L80 1225 50 1280 0 1310M1200 41L1210 235 1185 360 1175 480M1210 238L1440 245 1470 220 1503 215M1190 362L1430 370 1440 400M1385 370L1383 500 1290 525M1300 210L1310 120 1330 41M1480 41V100M100 1550H280M38 375L0 420" />
                  <path vector-effect="non-scaling-stroke" transform="translate(380 850) scale(.38265 .40689)" d="M207 0L203 217 120 180 60 180 26 190M203 217L255 230 258 440 312 545 290 680 270 720 280 748M258 300L600 302M700 35H1568M700 35L670 80 660 110 630 150 605 180 600 300 615 390 600 440 560 500 545 567H763L755 610 785 670 840 672M960 35L935 250 918 450 926 675M1260 35L1280 180 1335 395 1315 450 1328 567H1020L1040 620 1035 660M1328 567L1345 605 1540 615M1412 35L1415 0M1568 30L1530 70 1568 100" />
                  <path vector-effect="non-scaling-stroke" transform="translate(960 850) scale(.40816 .40689)" d="M0 35H30L120 5 285 18M430 70L550 190M30 35L10 70 60 110 100 180 160 240 215 310 260 427 290 430M140 630l5 20 10-20" />
                </g>
                <path vector-effect="non-scaling-stroke" transform="translate(960 330) scale(.38265 .33801)" fill="none" stroke="#5c6680" stroke-width="1.800" d="M150 41L155 85 115 200 110 260 75 305 38 320V390L88 432 125 430 260 335 400 300 540 210 520 160 503 105 560 76 790 73 805 41" />

                <!-- City dots -->
                <g fill="#fff" stroke="#3c3c3c" stroke-width="2.400">
                  <circle cx="769" cy="463" r="5" /><circle cx="391" cy="501" r="5" /><circle cx="453" cy="630" r="5" />
                  <circle cx="652" cy="657" r="5" /><circle cx="835" cy="590" r="5" /><circle cx="911" cy="630" r="5" />
                  <circle cx="807" cy="799" r="5" /><circle cx="659" cy="855" r="5" /><circle cx="1336" cy="579" r="5" />
                  <circle cx="1389" cy="534" r="5" /><circle cx="1144" cy="353" r="5" /><circle cx="1078" cy="851" r="5" />
                  <circle cx="916" cy="933" r="5" /><circle cx="1041" cy="1116" r="5" /><circle cx="1053" cy="1210" r="5" />
                  <circle cx="1004" cy="1240" r="5" /><circle cx="1107" cy="1352" r="5" /><circle cx="417" cy="1146" r="5" />
                  <circle cx="658" cy="1136" r="5" /><circle cx="1251" cy="641" r="6" />
                </g>
                <circle cx="1251" cy="641" r="3.500" fill="#000" />

                <!-- State names -->
                <g class="font-[Roboto,sans-serif] text-[22px] font-medium tracking-widest" fill="#52595e" stroke="#e6f3e9" stroke-width="5" stroke-linejoin="round" paint-order="stroke" text-anchor="middle">
                  <text x="903" y="352">MICHIGAN</text>
                  <text x="503" y="464">IOWA</text>
                  <text x="686" y="572">ILLINOIS</text>
                  <text x="838" y="572">INDIANA</text>
                  <text x="990" y="566">OHIO</text>
                  <text x="549" y="683">MISSOURI</text>
                  <text x="889" y="735">KENTUCKY</text>
                  <text x="812" y="833">TENNESSEE</text>
                  <text x="553" y="888">ARKANSAS</text>
                  <text x="678" y="954">MISSISSIPPI</text>
                  <text x="813" y="987">ALABAMA</text>
                  <text x="968" y="1003">GEORGIA</text>
                  <text x="585" y="1121">LOUISIANA</text>
                  <text x="1063" y="1276">FLORIDA</text>
                  <text x="1095" y="920">SOUTH</text>
                  <text x="1095" y="943">CAROLINA</text>
                  <text x="1163" y="825">NORTH</text>
                  <text x="1163" y="848">CAROLINA</text>
                  <text x="1173" y="735">VIRGINIA</text>
                  <text x="1072" y="661">WEST</text>
                  <text x="1073" y="683">VIRGINIA</text>
                  <text x="1254" y="613">MARYLAND</text>
                  <text x="1328" y="644">DE</text>
                  <text x="1364" y="599">NJ</text>
                  <text x="1222" y="534">PENNSYLVANIA</text>
                  <text x="1300" y="408">NEW YORK</text>
                  <text x="1499" y="366">NEW</text>
                  <text x="1427" y="389" text-anchor="start">HAMPSHIRE</text>
                  <text x="1397" y="438" text-anchor="start">MASSACHUSETTS</text>
                  <text x="1446" y="489">CT</text>
                  <text x="1520" y="497">RI</text>
                  <text x="399" y="833" text-anchor="end">OKLAHOMA</text>
                </g>

                <!-- City names -->
                <g class="font-[Roboto,sans-serif] text-[28px] font-medium" fill="#1f2124" stroke="#eef6f1" stroke-width="5" stroke-linejoin="round" paint-order="stroke" text-anchor="middle">
                  <text x="770" y="450">Chicago</text>
                  <text x="527" y="617" text-anchor="end">Kansas City</text>
                  <text x="589" y="645">St. Louis</text>
                  <text x="751" y="621">Indianapolis</text>
                  <text x="911" y="617">Cincinnati</text>
                  <text x="808" y="786">Nashville</text>
                  <text x="1251" y="567">Philadelphia</text>
                  <text x="1389" y="522">New York</text>
                  <text x="1251" y="674">Washington</text>
                  <text x="1078" y="883">Charlotte</text>
                  <text x="916" y="920">Atlanta</text>
                  <text x="1042" y="1104">Jacksonville</text>
                  <text x="1054" y="1197">Orlando</text>
                  <text x="1012" y="1250" text-anchor="start">Tampa</text>
                  <text x="1108" y="1340">Miami</text>
                  <text x="471" y="1134" text-anchor="end">Houston</text>
                  <text x="1205" y="1402">The</text>
                  <g class="text-[22px]">
                    <text x="426" y="491" text-anchor="end">Omaha</text>
                    <text x="659" y="845">Memphis</text>
                    <text x="657" y="1162">New Orleans</text>
                  </g>
                </g>
                <g class="font-[Roboto,sans-serif] text-[22px]" fill="#3360b8" text-anchor="middle">
                  <text x="658" y="1371">Gulf of</text>
                  <text x="658" y="1395">Mexico</text>
                </g>
                <text x="410" y="1368" class="font-[Lato,sans-serif] text-[36px] font-bold" stroke="#dde7fb" stroke-width="5" stroke-linejoin="round" paint-order="stroke"><tspan fill="#5383ec">G</tspan><tspan fill="#d85140">o</tspan><tspan fill="#f1bf42">o</tspan><tspan fill="#5383ec">g</tspan><tspan fill="#58a55c">l</tspan><tspan fill="#d85140">e</tspan></text>

                <!-- Vehicle marker -->
                <path fill="#d84f3e" stroke="#b5352b" stroke-width="2" d="M963 863C958 840 938 836 938 815A25 25 0 0 1 988 815C988 836 968 840 963 863z" />
                <circle cx="963" cy="816" r="10" fill="#a1261d" />
              </svg>

              <div class="absolute left-[20px] top-[24px] flex h-[68px] divide-x-2 divide-[#ccc] overflow-hidden rounded-lg border-2 border-[#ccc] bg-white">
                <button aria-label="Zoom in" class="flex w-[75px] items-center justify-center"><svg class="h-[26px] w-[26px]" viewBox="0 0 26 26"><use href="#i-search" width="26" height="26" /><path stroke="currentColor" stroke-width="2" d="M6 10.500h9M10.500 6v9" /></svg></button>
                <button aria-label="Zoom out" class="flex w-[76px] items-center justify-center"><svg class="h-[26px] w-[26px]" viewBox="0 0 26 26"><use href="#i-search" width="26" height="26" /><path stroke="currentColor" stroke-width="2" d="M6 10.500h9" /></svg></button>
                <button aria-label="Fit" class="flex w-[74px] items-center justify-center"><svg class="h-[24px] w-[24px]"><use href="#i-expand" /></svg></button>
                <button aria-label="Satellite" class="flex w-[79px] items-center justify-center"><svg class="h-[24px] w-[30px]"><use href="#i-image" /></svg></button>
              </div>
            </div>

            <div class="mt-1 grid grid-cols-2 overflow-hidden rounded-lg text-white">
              <button class="flex h-[68px] items-center justify-center gap-2 bg-[#5296d5]"><svg class="h-[26px] w-[26px]"><use href="#i-search" /></svg>Zoom to last position</button>
              <button class="flex h-[68px] items-center justify-center gap-2 bg-[#38475c]"><svg class="h-[24px] w-[24px]"><use href="#i-globe" /></svg>Show all positions</button>
            </div>
          </div>

          <!-- Events -->
          <div>
            <div class="relative flex">
              <button class="flex h-[68px] items-center gap-2 rounded-lg bg-[#38475c] px-[27px] text-white"><svg class="h-[24px] w-[24px]"><use href="#i-globe" /></svg>Get Latest Vehicle Location via Motive</button>
              <svg class="absolute left-[591px] top-[-82px] h-[81px] w-[192px]" viewBox="2226 236 192 81"><path fill="#ea4025" d="M2226 311L2264 271 2272 289 2415 236 2418 245 2275 298 2282 317z" /></svg>
            </div>

            <section class="mt-[30px] overflow-hidden rounded-lg border-2 border-[#c3e6ef] bg-white shadow-[0_2px_3px_rgba(0,0,0,.1)]">
              <div class="flex h-[77px] items-center justify-between border-b-2 border-[#c3e6ef] bg-[#deebf6] px-[31px] text-[31px] font-bold">
                <h3 class="text-[#41728f]">Recent Events</h3>
                <a href="#accountability" class="italic text-[#467ab8]">View Accountability Log</a>
              </div>
              <ul class="px-[30px] py-[30px]">
                <li class="mb-4">
                  <p class="flex items-center gap-2 leading-[40px]"><svg class="h-[24px] w-[24px] text-[#467ab8]"><use href="#i-target" /></svg><span>Driver location update from <b>Motive ELD</b></span></p>
                  <p class="text-[21px] leading-[34px]">16 days ago</p>
                </li>
                <li class="mb-4">
                  <p class="flex items-center gap-2 leading-[40px]"><svg class="h-[24px] w-[24px] text-[#467ab8]"><use href="#i-target" /></svg><span>Driver location update from <b>Motive ELD</b></span></p>
                  <p class="text-[21px] leading-[34px]">21 days ago</p>
                </li>
                <li class="mb-4">
                  <p class="flex items-center gap-2 leading-[40px]"><svg class="h-[24px] w-[24px] text-[#467ab8]"><use href="#i-target" /></svg><span>Driver location update from <b>Motive ELD</b></span></p>
                  <p class="text-[21px] leading-[34px]">25 days ago</p>
                </li>
              </ul>
            </section>
          </div>
        </div>

        <!-- Feedback tab, tucked behind the edge -->
        <div class="absolute right-0 top-[533px] h-[162px] w-[3px] rounded-l-sm bg-[#c9504a]"></div>

        <button class="absolute bottom-4 right-[18px] flex h-[68px] w-[319px] items-center rounded-lg bg-[#38475c] pl-8 text-white shadow-[0_4px_20px_rgba(0,0,0,.7)]">
          <svg class="mr-[14px] h-[24px] w-[24px]"><use href="#i-floppy" /></svg>Save &amp; Return<svg class="ml-[14px] h-[26px] w-[17px]"><use href="#i-next" /></svg>
        </button>
      </main>
    </div>
  </body>
</html>
